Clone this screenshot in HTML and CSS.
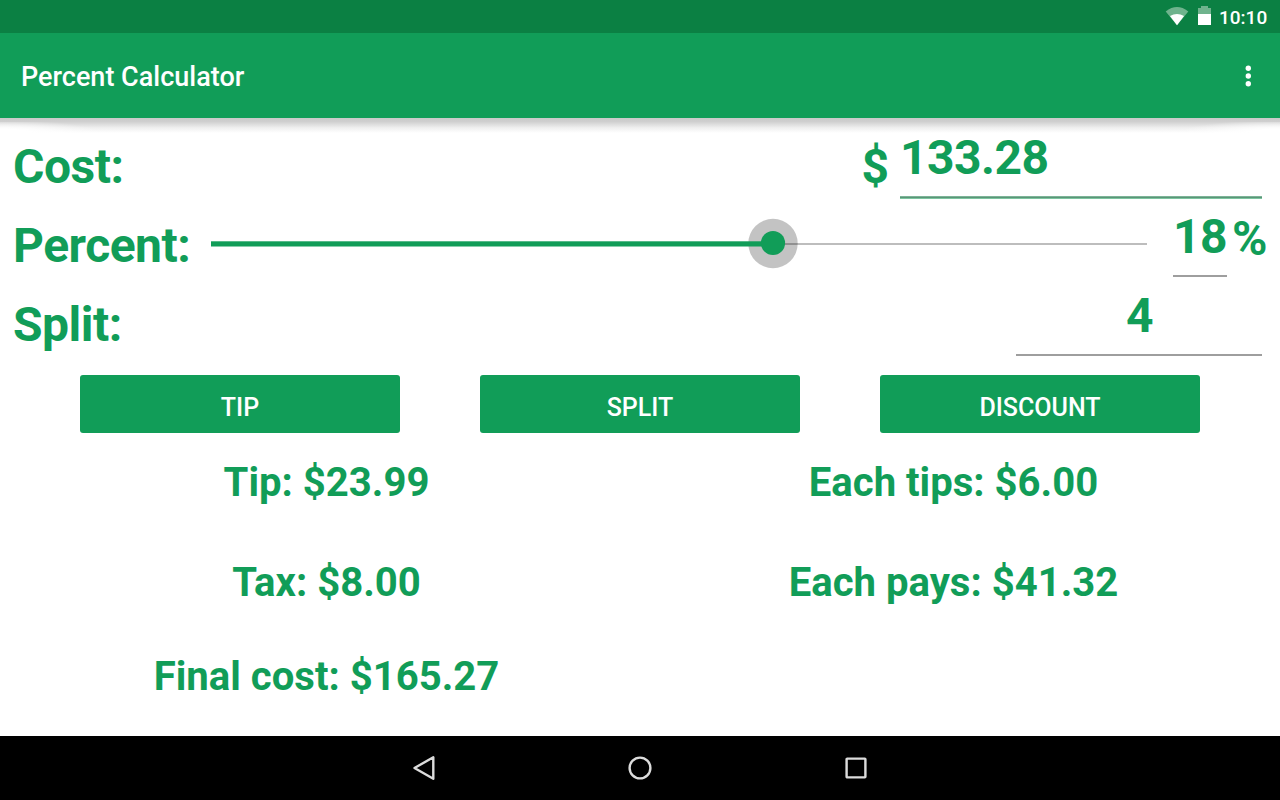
FILE: index.html
```html
<!DOCTYPE html>
<html lang="en">
<head>
<meta charset="utf-8">
<title>Percent Calculator</title>
<link rel="stylesheet" href="styles.css">
</head>
<body>
<div class="status">
  <svg class="wifi" width="24" height="20" viewBox="0 0 24 20"><path d="M.7 5.4Q12-3.3 23.3 5.4L12 19.2Z" fill="#6fb38d"/><path d="M5 10Q12 5.8 19 10L12 19.2Z" fill="#fff"/></svg>
  <svg class="battery" width="13" height="19" viewBox="0 0 13 19"><path d="M0 2H3V0H10V2H13V8H0Z" fill="#6fb38d"/><path d="M0 8H13V19H0Z" fill="#fff"/></svg>
  <span class="clock">10:10</span>
</div>
<header class="appbar">
  <h1 class="title">Percent Calculator</h1>
  <svg class="menu" width="6" height="22" viewBox="0 0 6 22"><g fill="#fff"><circle cx="3.3" cy="3.2" r="2.7"/><circle cx="3.3" cy="11" r="2.7"/><circle cx="3.3" cy="18.8" r="2.7"/></g></svg>
</header>
<main class="content">
  <div class="shadow"></div>
  <section class="row">
    <span class="label">Cost:</span>
    <span class="unit dollar">$</span>
    <div class="field cost">133.28</div>
  </section>
  <section class="row">
    <span class="label percent-label">Percent:</span>
    <svg class="slider" width="940" height="79" viewBox="0 0 940 79">
      <rect x="0" y="37" width="936" height="2" fill="#bdbdbd"/>
      <circle cx="562" cy="37.5" r="24.7" fill="#000" fill-opacity=".235"/>
      <rect x="0" y="35.3" width="562" height="5.2" fill="#119d58"/>
      <circle cx="562" cy="37" r="12.1" fill="#119d58"/>
    </svg>
    <div class="field percent">18</div>
    <span class="unit pct">%</span>
  </section>
  <section class="row">
    <span class="label">Split:</span>
    <div class="field split">4</div>
  </section>
  <div class="buttons">
    <button class="btn">TIP</button>
    <button class="btn">SPLIT</button>
    <button class="btn">DISCOUNT</button>
  </div>
  <div class="results">
    <span>Tip: $23.99</span><span>Each tips: $6.00</span>
    <span>Tax: $8.00</span><span>Each pays: $41.32</span>
    <span class="final">Final cost: $165.27</span>
  </div>
</main>
<nav class="navbar">
  <svg width="28" height="28" viewBox="0 0 28 28"><path d="M4.5 14L23.3 3.3V24.7Z"/></svg>
  <svg width="28" height="28" viewBox="0 0 28 28"><circle cx="14" cy="14" r="10.4"/></svg>
  <svg width="28" height="28" viewBox="0 0 28 28"><rect x="4.6" y="4.6" width="18.8" height="18.8" rx=".6"/></svg>
</nav>
</body>
</html>
```
FILE: styles.css
```css
* { box-sizing: border-box; }
body {
  margin: 0;
  width: 1280px;
  height: 800px;
  display: flex;
  flex-direction: column;
  overflow: hidden;
  background: #fff;
  color: #119d58;
  font-family: Roboto, sans-serif;
}
.status {
  height: 33px;
  background: #0b8043;
  color: #fff;
  display: flex;
  align-items: flex-start;
  justify-content: flex-end;
  padding: 6px 11px 0 0;
}
.wifi { margin-right: 9px; }
.battery { margin-right: 8px; }
.clock { width: 50px; font-size: 19px; font-weight: 500; line-height: 23px; }
.appbar {
  height: 85px;
  background: #119d58;
  color: #fff;
  display: flex;
  align-items: center;
  justify-content: space-between;
  padding: 0 29px 0 21px;
}
.title { margin: 0; padding-top: 2px; font-size: 27px; font-weight: 500; line-height: 86px; }
.content { position: relative; height: 618px; padding: 9px 13px 0; }
.shadow {
  position: absolute;
  left: 0;
  top: 0;
  width: 100%;
  height: 15px;
  background:
    linear-gradient(#cacaca, #d0d0d0) top / 100% 4px no-repeat,
    radial-gradient(100px 13px at 0 100%, #fff 30%, rgba(255, 255, 255, 0)),
    radial-gradient(100px 13px at 100% 100%, #fff 30%, rgba(255, 255, 255, 0)),
    linear-gradient(#c6c6c6, #d4d4d4 30%, #efefef 65%, #fff);
}
.row {
  position: relative;
  display: flex;
  height: 79px;
  font-size: 48px;
  font-weight: 700;
  line-height: 79px;
  letter-spacing: -.5px;
}
.label { flex: 1; }
.percent-label { flex: 0 0 198px; }
.slider { flex: none; }
.unit { width: 38.5px; }
.field { height: 71px; line-height: 61px; border-bottom: 2px solid #9e9e9e; margin-right: 5px; }
.cost {
  width: 362px;
  height: 72px;
  border-bottom: 0;
  background: linear-gradient(#7cb497 1px, #5c9478 1px, #5c9478 2px, #7cc6a0 2px) bottom / 100% 3px no-repeat;
}
.percent { width: 54px; margin-left: 22px; text-align: center; }
.pct { width: 35px; line-height: 65px; }
.split { width: 246px; padding-left: 1px; text-align: center; }
.buttons { display: flex; justify-content: space-between; padding: 11px 67px 0; }
.btn {
  width: 320px;
  height: 58px;
  padding: 6px 0 0;
  border: 0;
  border-radius: 3px;
  background: #119d58;
  color: #fff;
  font: 500 25px Roboto, sans-serif;
}
.results {
  display: grid;
  grid-template-columns: 1fr 1fr;
  grid-template-rows: 100px 100px 88px;
  text-align: center;
  font-size: 40.1px;
  font-weight: 700;
  line-height: 100px;
}
.final { line-height: 88px; }
.navbar {
  height: 64px;
  background: #000;
  display: flex;
  align-items: center;
  justify-content: center;
  gap: 188px;
}
.navbar svg { fill: none; stroke: #dcdcdc; stroke-width: 2.4; stroke-linejoin: round; }
```
